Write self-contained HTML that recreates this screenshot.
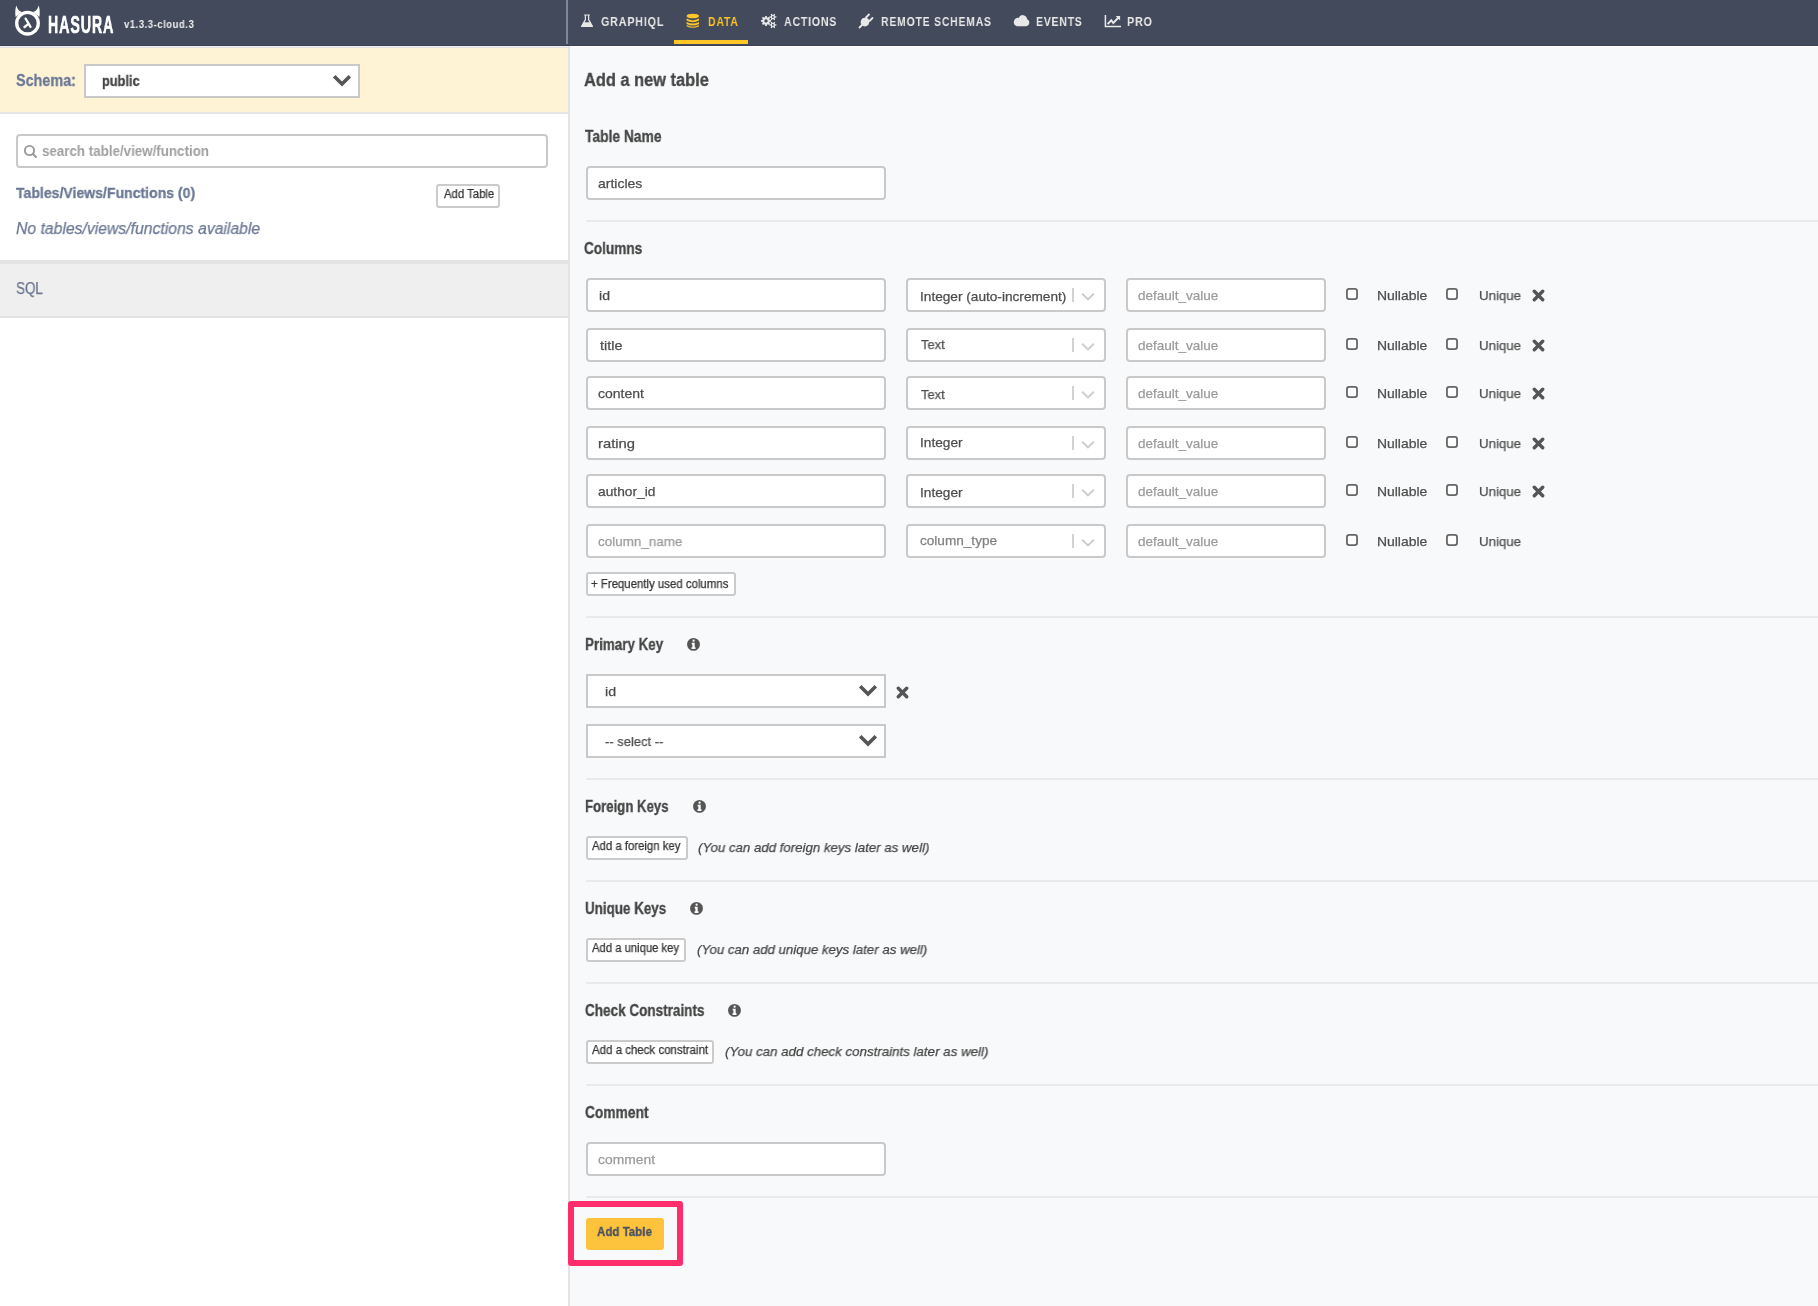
<!DOCTYPE html>
<html><head><meta charset="utf-8"><title>Hasura - Add a new table</title>
<style>
html,body{margin:0;padding:0;width:1818px;height:1306px;overflow:hidden;background:#f8f9fa;font-family:"Liberation Sans",sans-serif}
body>div{position:absolute}
.t{line-height:40px;white-space:pre;transform-origin:0 0;will-change:transform}
</style></head><body>
<div style="left:570px;top:46px;width:1248px;height:1260px;background:#f8f9fa"></div>
<div style="left:570px;top:46px;width:1248px;height:1px;background:#ffffff"></div>
<div style="left:0px;top:46px;width:568px;height:1260px;background:#ffffff"></div>
<div style="left:0px;top:46px;width:568px;height:1px;background:#efefef"></div>
<div style="left:0px;top:47px;width:568px;height:1px;background:#e3e3e3"></div>
<div style="left:568px;top:46px;width:2px;height:1260px;background:#e3e3e3"></div>
<div style="left:0px;top:48px;width:568px;height:64px;background:#fff3d5"></div>
<div style="left:0px;top:112px;width:568px;height:2px;background:#e5e5e5"></div>
<div style="left:84px;top:64px;width:276px;height:34px;background:#fff;border:2px solid #c9c9c9;box-sizing:border-box"></div>
<div style="left:16px;top:134px;width:532px;height:34px;background:#fff;border:2px solid #c9c9c9;border-radius:4px;box-sizing:border-box"></div>
<div style="left:436px;top:184px;width:64px;height:24px;background:#fff;border:2px solid #cbcbcb;border-radius:3px;box-sizing:border-box"></div>
<div style="left:0px;top:260px;width:568px;height:4px;background:#e3e3e3"></div>
<div style="left:0px;top:264px;width:568px;height:52px;background:#efefef"></div>
<div style="left:0px;top:316px;width:568px;height:2px;background:#e3e3e3"></div>
<div style="left:0px;top:0px;width:1818px;height:45px;background:#434a5b"></div>
<div style="left:0px;top:45px;width:1818px;height:1px;background:#3b4052"></div>
<div style="left:566px;top:0px;width:2px;height:44px;background:#7e8699"></div>
<div style="left:674px;top:40px;width:74px;height:4px;background:#ffc627"></div>
<div style="left:586px;top:220px;width:1232px;height:2px;background:#e9eaeb"></div>
<div style="left:586px;top:616px;width:1232px;height:2px;background:#e9eaeb"></div>
<div style="left:586px;top:778px;width:1232px;height:2px;background:#e9eaeb"></div>
<div style="left:586px;top:880px;width:1232px;height:2px;background:#e9eaeb"></div>
<div style="left:586px;top:982px;width:1232px;height:2px;background:#e9eaeb"></div>
<div style="left:586px;top:1084px;width:1232px;height:2px;background:#e9eaeb"></div>
<div style="left:586px;top:1196px;width:1232px;height:2px;background:#e9eaeb"></div>
<div style="left:586px;top:166px;width:300px;height:34px;background:#fff;border:2px solid #c9c9c9;border-radius:4px;box-sizing:border-box"></div>
<div style="left:586px;top:278px;width:300px;height:34px;background:#fff;border:2px solid #c9c9c9;border-radius:4px;box-sizing:border-box"></div>
<div style="left:906px;top:278px;width:200px;height:34px;background:#fff;border:2px solid #c9c9c9;border-radius:4px;box-sizing:border-box"></div>
<div style="left:1072px;top:288px;width:2px;height:14px;background:#d2d2d2"></div>
<div style="left:1126px;top:278px;width:200px;height:34px;background:#fff;border:2px solid #c9c9c9;border-radius:4px;box-sizing:border-box"></div>
<div style="left:586px;top:328px;width:300px;height:34px;background:#fff;border:2px solid #c9c9c9;border-radius:4px;box-sizing:border-box"></div>
<div style="left:906px;top:328px;width:200px;height:34px;background:#fff;border:2px solid #c9c9c9;border-radius:4px;box-sizing:border-box"></div>
<div style="left:1072px;top:338px;width:2px;height:14px;background:#d2d2d2"></div>
<div style="left:1126px;top:328px;width:200px;height:34px;background:#fff;border:2px solid #c9c9c9;border-radius:4px;box-sizing:border-box"></div>
<div style="left:586px;top:376px;width:300px;height:34px;background:#fff;border:2px solid #c9c9c9;border-radius:4px;box-sizing:border-box"></div>
<div style="left:906px;top:376px;width:200px;height:34px;background:#fff;border:2px solid #c9c9c9;border-radius:4px;box-sizing:border-box"></div>
<div style="left:1072px;top:386px;width:2px;height:14px;background:#d2d2d2"></div>
<div style="left:1126px;top:376px;width:200px;height:34px;background:#fff;border:2px solid #c9c9c9;border-radius:4px;box-sizing:border-box"></div>
<div style="left:586px;top:426px;width:300px;height:34px;background:#fff;border:2px solid #c9c9c9;border-radius:4px;box-sizing:border-box"></div>
<div style="left:906px;top:426px;width:200px;height:34px;background:#fff;border:2px solid #c9c9c9;border-radius:4px;box-sizing:border-box"></div>
<div style="left:1072px;top:436px;width:2px;height:14px;background:#d2d2d2"></div>
<div style="left:1126px;top:426px;width:200px;height:34px;background:#fff;border:2px solid #c9c9c9;border-radius:4px;box-sizing:border-box"></div>
<div style="left:586px;top:474px;width:300px;height:34px;background:#fff;border:2px solid #c9c9c9;border-radius:4px;box-sizing:border-box"></div>
<div style="left:906px;top:474px;width:200px;height:34px;background:#fff;border:2px solid #c9c9c9;border-radius:4px;box-sizing:border-box"></div>
<div style="left:1072px;top:484px;width:2px;height:14px;background:#d2d2d2"></div>
<div style="left:1126px;top:474px;width:200px;height:34px;background:#fff;border:2px solid #c9c9c9;border-radius:4px;box-sizing:border-box"></div>
<div style="left:586px;top:524px;width:300px;height:34px;background:#fff;border:2px solid #c9c9c9;border-radius:4px;box-sizing:border-box"></div>
<div style="left:906px;top:524px;width:200px;height:34px;background:#fff;border:2px solid #c9c9c9;border-radius:4px;box-sizing:border-box"></div>
<div style="left:1072px;top:534px;width:2px;height:14px;background:#d2d2d2"></div>
<div style="left:1126px;top:524px;width:200px;height:34px;background:#fff;border:2px solid #c9c9c9;border-radius:4px;box-sizing:border-box"></div>
<div style="left:586px;top:572px;width:150px;height:24px;background:#fff;border:2px solid #cbcbcb;border-radius:3px;box-sizing:border-box"></div>
<div style="left:586px;top:674px;width:300px;height:34px;background:#fff;border:2px solid #c9c9c9;box-sizing:border-box"></div>
<div style="left:586px;top:724px;width:300px;height:34px;background:#fff;border:2px solid #c9c9c9;box-sizing:border-box"></div>
<div style="left:586px;top:836px;width:102px;height:24px;background:#fff;border:2px solid #cbcbcb;border-radius:3px;box-sizing:border-box"></div>
<div style="left:586px;top:938px;width:100px;height:24px;background:#fff;border:2px solid #cbcbcb;border-radius:3px;box-sizing:border-box"></div>
<div style="left:586px;top:1040px;width:128px;height:24px;background:#fff;border:2px solid #cbcbcb;border-radius:3px;box-sizing:border-box"></div>
<div style="left:586px;top:1142px;width:300px;height:34px;background:#fff;border:2px solid #c9c9c9;border-radius:4px;box-sizing:border-box"></div>
<div style="left:568px;top:1201px;width:115px;height:65px;border:6px solid #ff2d6b;border-radius:3px;box-sizing:border-box"></div>
<div style="left:586px;top:1218px;width:78px;height:32px;background:#fec33c;border-radius:3px"></div>
<svg style="position:absolute;left:332px;top:74px" width="20" height="14" viewBox="0 0 20 14"><polyline points="2.2,2.2 10,10 17.8,2.2" fill="none" stroke="#555555" stroke-width="3.6" stroke-linecap="butt" stroke-linejoin="miter"/></svg>
<svg style="position:absolute;left:858px;top:684px" width="20" height="14" viewBox="0 0 20 14"><polyline points="2.2,2.2 10,10 17.8,2.2" fill="none" stroke="#555555" stroke-width="3.6" stroke-linecap="butt" stroke-linejoin="miter"/></svg>
<svg style="position:absolute;left:858px;top:734px" width="20" height="14" viewBox="0 0 20 14"><polyline points="2.2,2.2 10,10 17.8,2.2" fill="none" stroke="#555555" stroke-width="3.6" stroke-linecap="butt" stroke-linejoin="miter"/></svg>
<svg style="position:absolute;left:1081px;top:292px" width="14" height="9" viewBox="0 0 14 9"><polyline points="1.2,1.8 7,7.4 12.8,1.8" fill="none" stroke="#cccccc" stroke-width="1.9"/></svg>
<svg style="position:absolute;left:1081px;top:342px" width="14" height="9" viewBox="0 0 14 9"><polyline points="1.2,1.8 7,7.4 12.8,1.8" fill="none" stroke="#cccccc" stroke-width="1.9"/></svg>
<svg style="position:absolute;left:1081px;top:390px" width="14" height="9" viewBox="0 0 14 9"><polyline points="1.2,1.8 7,7.4 12.8,1.8" fill="none" stroke="#cccccc" stroke-width="1.9"/></svg>
<svg style="position:absolute;left:1081px;top:440px" width="14" height="9" viewBox="0 0 14 9"><polyline points="1.2,1.8 7,7.4 12.8,1.8" fill="none" stroke="#cccccc" stroke-width="1.9"/></svg>
<svg style="position:absolute;left:1081px;top:488px" width="14" height="9" viewBox="0 0 14 9"><polyline points="1.2,1.8 7,7.4 12.8,1.8" fill="none" stroke="#cccccc" stroke-width="1.9"/></svg>
<svg style="position:absolute;left:1081px;top:538px" width="14" height="9" viewBox="0 0 14 9"><polyline points="1.2,1.8 7,7.4 12.8,1.8" fill="none" stroke="#cccccc" stroke-width="1.9"/></svg>
<svg style="position:absolute;left:1532px;top:289px" width="13" height="13" viewBox="0 0 13 13"><path d="M2.3,2.3 L10.7,10.7 M10.7,2.3 L2.3,10.7" stroke="#555555" stroke-width="3.4" stroke-linecap="round" fill="none"/></svg>
<svg style="position:absolute;left:1532px;top:339px" width="13" height="13" viewBox="0 0 13 13"><path d="M2.3,2.3 L10.7,10.7 M10.7,2.3 L2.3,10.7" stroke="#555555" stroke-width="3.4" stroke-linecap="round" fill="none"/></svg>
<svg style="position:absolute;left:1532px;top:387px" width="13" height="13" viewBox="0 0 13 13"><path d="M2.3,2.3 L10.7,10.7 M10.7,2.3 L2.3,10.7" stroke="#555555" stroke-width="3.4" stroke-linecap="round" fill="none"/></svg>
<svg style="position:absolute;left:1532px;top:437px" width="13" height="13" viewBox="0 0 13 13"><path d="M2.3,2.3 L10.7,10.7 M10.7,2.3 L2.3,10.7" stroke="#555555" stroke-width="3.4" stroke-linecap="round" fill="none"/></svg>
<svg style="position:absolute;left:1532px;top:485px" width="13" height="13" viewBox="0 0 13 13"><path d="M2.3,2.3 L10.7,10.7 M10.7,2.3 L2.3,10.7" stroke="#555555" stroke-width="3.4" stroke-linecap="round" fill="none"/></svg>
<svg style="position:absolute;left:896px;top:686px" width="13" height="13" viewBox="0 0 13 13"><path d="M2.3,2.3 L10.7,10.7 M10.7,2.3 L2.3,10.7" stroke="#555555" stroke-width="3.4" stroke-linecap="round" fill="none"/></svg>
<svg style="position:absolute;left:1346px;top:288px" width="12" height="12" viewBox="0 0 12 12"><rect x="0.95" y="0.95" width="10.1" height="10.1" rx="2.3" fill="#fff" stroke="#666" stroke-width="1.8"/></svg>
<svg style="position:absolute;left:1446px;top:288px" width="12" height="12" viewBox="0 0 12 12"><rect x="0.95" y="0.95" width="10.1" height="10.1" rx="2.3" fill="#fff" stroke="#666" stroke-width="1.8"/></svg>
<svg style="position:absolute;left:1346px;top:338px" width="12" height="12" viewBox="0 0 12 12"><rect x="0.95" y="0.95" width="10.1" height="10.1" rx="2.3" fill="#fff" stroke="#666" stroke-width="1.8"/></svg>
<svg style="position:absolute;left:1446px;top:338px" width="12" height="12" viewBox="0 0 12 12"><rect x="0.95" y="0.95" width="10.1" height="10.1" rx="2.3" fill="#fff" stroke="#666" stroke-width="1.8"/></svg>
<svg style="position:absolute;left:1346px;top:386px" width="12" height="12" viewBox="0 0 12 12"><rect x="0.95" y="0.95" width="10.1" height="10.1" rx="2.3" fill="#fff" stroke="#666" stroke-width="1.8"/></svg>
<svg style="position:absolute;left:1446px;top:386px" width="12" height="12" viewBox="0 0 12 12"><rect x="0.95" y="0.95" width="10.1" height="10.1" rx="2.3" fill="#fff" stroke="#666" stroke-width="1.8"/></svg>
<svg style="position:absolute;left:1346px;top:436px" width="12" height="12" viewBox="0 0 12 12"><rect x="0.95" y="0.95" width="10.1" height="10.1" rx="2.3" fill="#fff" stroke="#666" stroke-width="1.8"/></svg>
<svg style="position:absolute;left:1446px;top:436px" width="12" height="12" viewBox="0 0 12 12"><rect x="0.95" y="0.95" width="10.1" height="10.1" rx="2.3" fill="#fff" stroke="#666" stroke-width="1.8"/></svg>
<svg style="position:absolute;left:1346px;top:484px" width="12" height="12" viewBox="0 0 12 12"><rect x="0.95" y="0.95" width="10.1" height="10.1" rx="2.3" fill="#fff" stroke="#666" stroke-width="1.8"/></svg>
<svg style="position:absolute;left:1446px;top:484px" width="12" height="12" viewBox="0 0 12 12"><rect x="0.95" y="0.95" width="10.1" height="10.1" rx="2.3" fill="#fff" stroke="#666" stroke-width="1.8"/></svg>
<svg style="position:absolute;left:1346px;top:534px" width="12" height="12" viewBox="0 0 12 12"><rect x="0.95" y="0.95" width="10.1" height="10.1" rx="2.3" fill="#fff" stroke="#666" stroke-width="1.8"/></svg>
<svg style="position:absolute;left:1446px;top:534px" width="12" height="12" viewBox="0 0 12 12"><rect x="0.95" y="0.95" width="10.1" height="10.1" rx="2.3" fill="#fff" stroke="#666" stroke-width="1.8"/></svg>
<svg style="position:absolute;left:687px;top:638px" width="14" height="14" viewBox="0 0 14 14"><circle cx="6.5" cy="6.4" r="6.4" fill="#555555"/><circle cx="6.6" cy="2.7" r="1.15" fill="#fff"/><path d="M4.7,4.8 H7.7 V9.2 H8.5 V10.9 H4.5 V9.2 H5.4 V6.4 H4.7 Z" fill="#fff"/></svg>
<svg style="position:absolute;left:693px;top:800px" width="14" height="14" viewBox="0 0 14 14"><circle cx="6.5" cy="6.4" r="6.4" fill="#555555"/><circle cx="6.6" cy="2.7" r="1.15" fill="#fff"/><path d="M4.7,4.8 H7.7 V9.2 H8.5 V10.9 H4.5 V9.2 H5.4 V6.4 H4.7 Z" fill="#fff"/></svg>
<svg style="position:absolute;left:690px;top:902px" width="14" height="14" viewBox="0 0 14 14"><circle cx="6.5" cy="6.4" r="6.4" fill="#555555"/><circle cx="6.6" cy="2.7" r="1.15" fill="#fff"/><path d="M4.7,4.8 H7.7 V9.2 H8.5 V10.9 H4.5 V9.2 H5.4 V6.4 H4.7 Z" fill="#fff"/></svg>
<svg style="position:absolute;left:728px;top:1004px" width="14" height="14" viewBox="0 0 14 14"><circle cx="6.5" cy="6.4" r="6.4" fill="#555555"/><circle cx="6.6" cy="2.7" r="1.15" fill="#fff"/><path d="M4.7,4.8 H7.7 V9.2 H8.5 V10.9 H4.5 V9.2 H5.4 V6.4 H4.7 Z" fill="#fff"/></svg>
<svg style="position:absolute;left:23px;top:144px" width="16" height="16" viewBox="0 0 16 16"><circle cx="6.5" cy="6.5" r="4.6" fill="none" stroke="#9a9a9a" stroke-width="1.9"/><line x1="9.8" y1="9.8" x2="12.9" y2="12.9" stroke="#9a9a9a" stroke-width="2.1" stroke-linecap="round"/></svg>
<svg style="position:absolute;left:13px;top:4px" width="30" height="34" viewBox="0 0 30 34"><path d="M3.3,1.5 C2.2,5 2,9 2.6,13 L9,8 C6,7.5 4.5,5 3.3,1.5 Z M25.7,1.5 C26.8,5 27,9 26.4,13 L20,8 C23,7.5 24.5,5 25.7,1.5 Z" fill="#fff"/><circle cx="14.5" cy="19.2" r="10.8" fill="none" stroke="#fff" stroke-width="3.3"/><path d="M12.6,14.6 L17.5,22.8 M14.6,20.6 L11.5,23" stroke="#fff" stroke-width="2.3" stroke-linecap="round" fill="none"/></svg>
<svg style="position:absolute;left:580px;top:14px" width="14" height="14" viewBox="0 0 14 14"><path d="M4.2,1 H9.8 M5.4,1 V5.6 L1.6,12.4 H12.4 L8.6,5.6 V1" fill="none" stroke="#e8e8e8" stroke-width="1.2" stroke-linejoin="round"/><path d="M3.6,8.2 H10.4 L12.6,12.8 H1.4 Z" fill="#e8e8e8"/></svg>
<svg style="position:absolute;left:685px;top:13px" width="16" height="16" viewBox="0 0 16 16"><ellipse cx="7.8" cy="3" rx="6.2" ry="2.3" fill="#ffc627"/><path d="M1.6,5.6 Q7.8,9.2 14,5.6 V7.6 Q7.8,11 1.6,7.6 Z M1.6,8.9 Q7.8,12.3 14,8.9 V10.9 Q7.8,14.3 1.6,10.9 Z M1.6,12.1 Q7.8,15.5 14,12.1 V13.2 Q7.8,16.2 1.6,13.2 Z" fill="#ffc627"/></svg>
<svg style="position:absolute;left:759px;top:12px" width="20" height="18" viewBox="0 0 20 18"><line x1="7" y1="8.9" x2="12.00" y2="8.90" stroke="#e8e8e8" stroke-width="1.8"/><line x1="7" y1="8.9" x2="10.54" y2="12.44" stroke="#e8e8e8" stroke-width="1.8"/><line x1="7" y1="8.9" x2="7.00" y2="13.90" stroke="#e8e8e8" stroke-width="1.8"/><line x1="7" y1="8.9" x2="3.46" y2="12.44" stroke="#e8e8e8" stroke-width="1.8"/><line x1="7" y1="8.9" x2="2.00" y2="8.90" stroke="#e8e8e8" stroke-width="1.8"/><line x1="7" y1="8.9" x2="3.46" y2="5.36" stroke="#e8e8e8" stroke-width="1.8"/><line x1="7" y1="8.9" x2="7.00" y2="3.90" stroke="#e8e8e8" stroke-width="1.8"/><line x1="7" y1="8.9" x2="10.54" y2="5.36" stroke="#e8e8e8" stroke-width="1.8"/><circle cx="7" cy="8.9" r="3.7" fill="#e8e8e8"/><circle cx="7" cy="8.9" r="1.7" fill="#434a5b"/><line x1="13.9" y1="5" x2="17.40" y2="5.00" stroke="#e8e8e8" stroke-width="1.3"/><line x1="13.9" y1="5" x2="15.65" y2="8.03" stroke="#e8e8e8" stroke-width="1.3"/><line x1="13.9" y1="5" x2="12.15" y2="8.03" stroke="#e8e8e8" stroke-width="1.3"/><line x1="13.9" y1="5" x2="10.40" y2="5.00" stroke="#e8e8e8" stroke-width="1.3"/><line x1="13.9" y1="5" x2="12.15" y2="1.97" stroke="#e8e8e8" stroke-width="1.3"/><line x1="13.9" y1="5" x2="15.65" y2="1.97" stroke="#e8e8e8" stroke-width="1.3"/><circle cx="13.9" cy="5" r="2.2" fill="#e8e8e8"/><circle cx="13.9" cy="5" r="0.9" fill="#434a5b"/><line x1="13.9" y1="13" x2="17.40" y2="13.00" stroke="#e8e8e8" stroke-width="1.3"/><line x1="13.9" y1="13" x2="15.65" y2="16.03" stroke="#e8e8e8" stroke-width="1.3"/><line x1="13.9" y1="13" x2="12.15" y2="16.03" stroke="#e8e8e8" stroke-width="1.3"/><line x1="13.9" y1="13" x2="10.40" y2="13.00" stroke="#e8e8e8" stroke-width="1.3"/><line x1="13.9" y1="13" x2="12.15" y2="9.97" stroke="#e8e8e8" stroke-width="1.3"/><line x1="13.9" y1="13" x2="15.65" y2="9.97" stroke="#e8e8e8" stroke-width="1.3"/><circle cx="13.9" cy="13" r="2.2" fill="#e8e8e8"/><circle cx="13.9" cy="13" r="0.9" fill="#434a5b"/></svg>
<svg style="position:absolute;left:857px;top:12px" width="18" height="18" viewBox="0 0 18 18"><line x1="2.5" y1="15.5" x2="6.5" y2="11.5" stroke="#e8e8e8" stroke-width="1.8" stroke-linecap="round"/><path d="M5.5,6.5 L11.5,12.5 Q8,16 5,13 Q2,10 5.5,6.5 Z" fill="#e8e8e8"/><circle cx="8.2" cy="9.8" r="4" fill="#e8e8e8"/><line x1="9" y1="5.5" x2="12" y2="2.5" stroke="#e8e8e8" stroke-width="1.8" stroke-linecap="round"/><line x1="12.5" y1="9" x2="15.5" y2="6" stroke="#e8e8e8" stroke-width="1.8" stroke-linecap="round"/></svg>
<svg style="position:absolute;left:1013px;top:14px" width="18" height="14" viewBox="0 0 18 14"><path transform="translate(0,12.2) scale(1,1.12) translate(0,-12)" d="M3.8,12 H13.5 A3.2,3.2 0 0 0 14.2,5.8 A4.6,4.6 0 0 0 5.6,4.6 A3.6,3.6 0 0 0 3.8,12 Z" fill="#e8e8e8"/></svg>
<svg style="position:absolute;left:1103px;top:14px" width="20" height="14" viewBox="0 0 20 14"><path d="M2.4,1 V12.4 H18" fill="none" stroke="#e8e8e8" stroke-width="1.5"/><polyline points="4.6,10.2 8.3,6.3 10.3,9 15.5,3.5" fill="none" stroke="#e8e8e8" stroke-width="1.9"/><path d="M12.6,2 H17.1 V6.5 Z" fill="#e8e8e8"/></svg>
<div class="t" style="left:48.31px;top:5px;font-size:24px;font-weight:bold;font-style:normal;color:#ffffff;letter-spacing:1.5px;-webkit-text-stroke:0.7px currentColor;transform:scaleX(0.5935)">HASURA</div>
<div class="t" style="left:123.80px;top:5px;font-size:10px;font-weight:bold;font-style:normal;color:#f0f0f0;letter-spacing:0.6px;transform:scaleX(0.9432)">v1.3.3-cloud.3</div>
<div class="t" style="left:601.18px;top:2px;font-size:13px;font-weight:bold;font-style:normal;color:#e8e8e8;letter-spacing:1px;transform:scaleX(0.8243)">GRAPHIQL</div>
<div class="t" style="left:708.19px;top:2px;font-size:13px;font-weight:bold;font-style:normal;color:#ffc627;letter-spacing:1px;transform:scaleX(0.8056)">DATA</div>
<div class="t" style="left:784.00px;top:2px;font-size:13px;font-weight:bold;font-style:normal;color:#e8e8e8;letter-spacing:1px;transform:scaleX(0.8125)">ACTIONS</div>
<div class="t" style="left:881.20px;top:2px;font-size:13px;font-weight:bold;font-style:normal;color:#e8e8e8;letter-spacing:1px;transform:scaleX(0.8015)">REMOTE SCHEMAS</div>
<div class="t" style="left:1036.20px;top:2px;font-size:13px;font-weight:bold;font-style:normal;color:#e8e8e8;letter-spacing:1px;transform:scaleX(0.8036)">EVENTS</div>
<div class="t" style="left:1127.17px;top:2px;font-size:13px;font-weight:bold;font-style:normal;color:#e8e8e8;letter-spacing:1px;transform:scaleX(0.8276)">PRO</div>
<div class="t" style="left:15.60px;top:61px;font-size:16px;font-weight:bold;font-style:normal;color:#6a7896;letter-spacing:0px;-webkit-text-stroke:0.3px currentColor;transform:scaleX(0.8984)">Schema:</div>
<div class="t" style="left:101.89px;top:61px;font-size:14px;font-weight:bold;font-style:normal;color:#454545;letter-spacing:0px;-webkit-text-stroke:0.3px currentColor;transform:scaleX(0.9125)">public</div>
<div class="t" style="left:42.05px;top:131px;font-size:14px;font-weight:bold;font-style:normal;color:#a0a0a0;letter-spacing:0px;transform:scaleX(0.9538)">search table/view/function</div>
<div class="t" style="left:16.00px;top:173px;font-size:15px;font-weight:bold;font-style:normal;color:#6b7894;letter-spacing:0px;-webkit-text-stroke:0.3px currentColor;transform:scaleX(0.9372)">Tables/Views/Functions (0)</div>
<div class="t" style="left:444.00px;top:174px;font-size:12px;font-weight:normal;font-style:normal;color:#333333;letter-spacing:0px;-webkit-text-stroke:0.25px currentColor;transform:scaleX(0.9434)">Add Table</div>
<div class="t" style="left:16.02px;top:209px;font-size:16px;font-weight:normal;font-style:italic;color:#6b7894;letter-spacing:0px;-webkit-text-stroke:0.25px currentColor;transform:scaleX(0.9838)">No tables/views/functions available</div>
<div class="t" style="left:16.16px;top:269px;font-size:16px;font-weight:normal;font-style:normal;color:#6b7690;letter-spacing:0px;-webkit-text-stroke:0.25px currentColor;transform:scaleX(0.8387)">SQL</div>
<div class="t" style="left:584.09px;top:60px;font-size:18px;font-weight:bold;font-style:normal;color:#454545;letter-spacing:0px;-webkit-text-stroke:0.3px currentColor;transform:scaleX(0.9111)">Add a new table</div>
<div class="t" style="left:585.00px;top:117px;font-size:16px;font-weight:bold;font-style:normal;color:#454545;letter-spacing:0px;-webkit-text-stroke:0.3px currentColor;transform:scaleX(0.8636)">Table Name</div>
<div class="t" style="left:598.46px;top:164px;font-size:13.5px;font-weight:normal;font-style:normal;color:#4d4d4d;letter-spacing:0px;-webkit-text-stroke:0.25px currentColor;transform:scaleX(1.0366)">articles</div>
<div class="t" style="left:584.15px;top:229px;font-size:16px;font-weight:bold;font-style:normal;color:#454545;letter-spacing:0px;-webkit-text-stroke:0.3px currentColor;transform:scaleX(0.8507)">Columns</div>
<div class="t" style="left:598.56px;top:276px;font-size:13.5px;font-weight:normal;font-style:normal;color:#4d4d4d;letter-spacing:0px;-webkit-text-stroke:0.25px currentColor;transform:scaleX(1.0444)">id</div>
<div class="t" style="left:599.60px;top:326px;font-size:13.5px;font-weight:normal;font-style:normal;color:#4d4d4d;letter-spacing:0px;-webkit-text-stroke:0.25px currentColor;transform:scaleX(1.0667)">title</div>
<div class="t" style="left:598.36px;top:374px;font-size:13.5px;font-weight:normal;font-style:normal;color:#4d4d4d;letter-spacing:0px;-webkit-text-stroke:0.25px currentColor;transform:scaleX(1.0372)">content</div>
<div class="t" style="left:598.31px;top:424px;font-size:13.5px;font-weight:normal;font-style:normal;color:#4d4d4d;letter-spacing:0px;-webkit-text-stroke:0.25px currentColor;transform:scaleX(1.0938)">rating</div>
<div class="t" style="left:598.38px;top:472px;font-size:13.5px;font-weight:normal;font-style:normal;color:#4d4d4d;letter-spacing:0px;-webkit-text-stroke:0.25px currentColor;transform:scaleX(1.0200)">author_id</div>
<div class="t" style="left:598.40px;top:522px;font-size:13.5px;font-weight:normal;font-style:normal;color:#9b9b9b;letter-spacing:0px;-webkit-text-stroke:0.25px currentColor;transform:scaleX(0.9952)">column_name</div>
<div class="t" style="left:920.49px;top:277px;font-size:13.5px;font-weight:normal;font-style:normal;color:#4d4d4d;letter-spacing:0px;-webkit-text-stroke:0.25px currentColor;transform:scaleX(1.0105)">Integer (auto-increment)</div>
<div class="t" style="left:921.00px;top:325px;font-size:13.5px;font-weight:normal;font-style:normal;color:#4d4d4d;letter-spacing:0px;-webkit-text-stroke:0.25px currentColor;transform:scaleX(0.9600)">Text</div>
<div class="t" style="left:921.00px;top:375px;font-size:13.5px;font-weight:normal;font-style:normal;color:#4d4d4d;letter-spacing:0px;-webkit-text-stroke:0.25px currentColor;transform:scaleX(0.9600)">Text</div>
<div class="t" style="left:920.49px;top:423px;font-size:13.5px;font-weight:normal;font-style:normal;color:#4d4d4d;letter-spacing:0px;-webkit-text-stroke:0.25px currentColor;transform:scaleX(1.0122)">Integer</div>
<div class="t" style="left:920.49px;top:473px;font-size:13.5px;font-weight:normal;font-style:normal;color:#4d4d4d;letter-spacing:0px;-webkit-text-stroke:0.25px currentColor;transform:scaleX(1.0122)">Integer</div>
<div class="t" style="left:919.99px;top:521px;font-size:13.5px;font-weight:normal;font-style:normal;color:#808080;letter-spacing:0px;-webkit-text-stroke:0.25px currentColor;transform:scaleX(1.0067)">column_type</div>
<div class="t" style="left:591.05px;top:564px;font-size:12px;font-weight:normal;font-style:normal;color:#333333;letter-spacing:0px;-webkit-text-stroke:0.25px currentColor;transform:scaleX(0.9510)">+ Frequently used columns</div>
<div class="t" style="left:584.76px;top:625px;font-size:16px;font-weight:bold;font-style:normal;color:#454545;letter-spacing:0px;-webkit-text-stroke:0.3px currentColor;transform:scaleX(0.8370)">Primary Key</div>
<div class="t" style="left:605.44px;top:672px;font-size:13.5px;font-weight:normal;font-style:normal;color:#4d4d4d;letter-spacing:0px;-webkit-text-stroke:0.25px currentColor;transform:scaleX(1.0556)">id</div>
<div class="t" style="left:605.24px;top:722px;font-size:13.5px;font-weight:normal;font-style:normal;color:#4d4d4d;letter-spacing:0px;-webkit-text-stroke:0.25px currentColor;transform:scaleX(0.9610)">-- select --</div>
<div class="t" style="left:584.78px;top:787px;font-size:16px;font-weight:bold;font-style:normal;color:#454545;letter-spacing:0px;-webkit-text-stroke:0.3px currentColor;transform:scaleX(0.8240)">Foreign Keys</div>
<div class="t" style="left:592.00px;top:826px;font-size:12px;font-weight:normal;font-style:normal;color:#333333;letter-spacing:0px;-webkit-text-stroke:0.25px currentColor;transform:scaleX(0.9462)">Add a foreign key</div>
<div class="t" style="left:697.82px;top:828px;font-size:13.5px;font-weight:normal;font-style:italic;color:#454545;letter-spacing:0px;-webkit-text-stroke:0.25px currentColor;transform:scaleX(0.9816)">(You can add foreign keys later as well)</div>
<div class="t" style="left:584.76px;top:889px;font-size:16px;font-weight:bold;font-style:normal;color:#454545;letter-spacing:0px;-webkit-text-stroke:0.3px currentColor;transform:scaleX(0.8379)">Unique Keys</div>
<div class="t" style="left:592.00px;top:928px;font-size:12px;font-weight:normal;font-style:normal;color:#333333;letter-spacing:0px;-webkit-text-stroke:0.25px currentColor;transform:scaleX(0.9387)">Add a unique key</div>
<div class="t" style="left:696.72px;top:930px;font-size:13.5px;font-weight:normal;font-style:italic;color:#454545;letter-spacing:0px;-webkit-text-stroke:0.25px currentColor;transform:scaleX(0.9798)">(You can add unique keys later as well)</div>
<div class="t" style="left:584.65px;top:991px;font-size:16px;font-weight:bold;font-style:normal;color:#454545;letter-spacing:0px;-webkit-text-stroke:0.3px currentColor;transform:scaleX(0.8450)">Check Constraints</div>
<div class="t" style="left:592.00px;top:1030px;font-size:12px;font-weight:normal;font-style:normal;color:#333333;letter-spacing:0px;-webkit-text-stroke:0.25px currentColor;transform:scaleX(0.9562)">Add a check constraint</div>
<div class="t" style="left:724.81px;top:1032px;font-size:13.5px;font-weight:normal;font-style:italic;color:#454545;letter-spacing:0px;-webkit-text-stroke:0.25px currentColor;transform:scaleX(0.9857)">(You can add check constraints later as well)</div>
<div class="t" style="left:584.54px;top:1093px;font-size:16px;font-weight:bold;font-style:normal;color:#454545;letter-spacing:0px;-webkit-text-stroke:0.3px currentColor;transform:scaleX(0.8603)">Comment</div>
<div class="t" style="left:598.47px;top:1140px;font-size:13.5px;font-weight:normal;font-style:normal;color:#9b9b9b;letter-spacing:0px;-webkit-text-stroke:0.25px currentColor;transform:scaleX(1.0278)">comment</div>
<div class="t" style="left:597.00px;top:1212px;font-size:13px;font-weight:bold;font-style:normal;color:#4a5064;letter-spacing:0px;-webkit-text-stroke:0.3px currentColor;transform:scaleX(0.8871)">Add Table</div>
<div class="t" style="left:1138.00px;top:276px;font-size:13.5px;font-weight:normal;font-style:normal;color:#9b9b9b;letter-spacing:0px;-webkit-text-stroke:0.25px currentColor;transform:scaleX(1.0000)">default_value</div>
<div class="t" style="left:1376.57px;top:276px;font-size:13.5px;font-weight:normal;font-style:normal;color:#4d4d4d;letter-spacing:0px;-webkit-text-stroke:0.25px currentColor;transform:scaleX(1.0298)">Nullable</div>
<div class="t" style="left:1478.72px;top:276px;font-size:13.5px;font-weight:normal;font-style:normal;color:#4d4d4d;letter-spacing:0px;-webkit-text-stroke:0.25px currentColor;transform:scaleX(0.9829)">Unique</div>
<div class="t" style="left:1138.00px;top:326px;font-size:13.5px;font-weight:normal;font-style:normal;color:#9b9b9b;letter-spacing:0px;-webkit-text-stroke:0.25px currentColor;transform:scaleX(1.0000)">default_value</div>
<div class="t" style="left:1376.57px;top:326px;font-size:13.5px;font-weight:normal;font-style:normal;color:#4d4d4d;letter-spacing:0px;-webkit-text-stroke:0.25px currentColor;transform:scaleX(1.0298)">Nullable</div>
<div class="t" style="left:1478.72px;top:326px;font-size:13.5px;font-weight:normal;font-style:normal;color:#4d4d4d;letter-spacing:0px;-webkit-text-stroke:0.25px currentColor;transform:scaleX(0.9829)">Unique</div>
<div class="t" style="left:1138.00px;top:374px;font-size:13.5px;font-weight:normal;font-style:normal;color:#9b9b9b;letter-spacing:0px;-webkit-text-stroke:0.25px currentColor;transform:scaleX(1.0000)">default_value</div>
<div class="t" style="left:1376.57px;top:374px;font-size:13.5px;font-weight:normal;font-style:normal;color:#4d4d4d;letter-spacing:0px;-webkit-text-stroke:0.25px currentColor;transform:scaleX(1.0298)">Nullable</div>
<div class="t" style="left:1478.72px;top:374px;font-size:13.5px;font-weight:normal;font-style:normal;color:#4d4d4d;letter-spacing:0px;-webkit-text-stroke:0.25px currentColor;transform:scaleX(0.9829)">Unique</div>
<div class="t" style="left:1138.00px;top:424px;font-size:13.5px;font-weight:normal;font-style:normal;color:#9b9b9b;letter-spacing:0px;-webkit-text-stroke:0.25px currentColor;transform:scaleX(1.0000)">default_value</div>
<div class="t" style="left:1376.57px;top:424px;font-size:13.5px;font-weight:normal;font-style:normal;color:#4d4d4d;letter-spacing:0px;-webkit-text-stroke:0.25px currentColor;transform:scaleX(1.0298)">Nullable</div>
<div class="t" style="left:1478.72px;top:424px;font-size:13.5px;font-weight:normal;font-style:normal;color:#4d4d4d;letter-spacing:0px;-webkit-text-stroke:0.25px currentColor;transform:scaleX(0.9829)">Unique</div>
<div class="t" style="left:1138.00px;top:472px;font-size:13.5px;font-weight:normal;font-style:normal;color:#9b9b9b;letter-spacing:0px;-webkit-text-stroke:0.25px currentColor;transform:scaleX(1.0000)">default_value</div>
<div class="t" style="left:1376.57px;top:472px;font-size:13.5px;font-weight:normal;font-style:normal;color:#4d4d4d;letter-spacing:0px;-webkit-text-stroke:0.25px currentColor;transform:scaleX(1.0298)">Nullable</div>
<div class="t" style="left:1478.72px;top:472px;font-size:13.5px;font-weight:normal;font-style:normal;color:#4d4d4d;letter-spacing:0px;-webkit-text-stroke:0.25px currentColor;transform:scaleX(0.9829)">Unique</div>
<div class="t" style="left:1138.00px;top:522px;font-size:13.5px;font-weight:normal;font-style:normal;color:#9b9b9b;letter-spacing:0px;-webkit-text-stroke:0.25px currentColor;transform:scaleX(1.0000)">default_value</div>
<div class="t" style="left:1376.57px;top:522px;font-size:13.5px;font-weight:normal;font-style:normal;color:#4d4d4d;letter-spacing:0px;-webkit-text-stroke:0.25px currentColor;transform:scaleX(1.0298)">Nullable</div>
<div class="t" style="left:1478.72px;top:522px;font-size:13.5px;font-weight:normal;font-style:normal;color:#4d4d4d;letter-spacing:0px;-webkit-text-stroke:0.25px currentColor;transform:scaleX(0.9829)">Unique</div>
</body></html>
